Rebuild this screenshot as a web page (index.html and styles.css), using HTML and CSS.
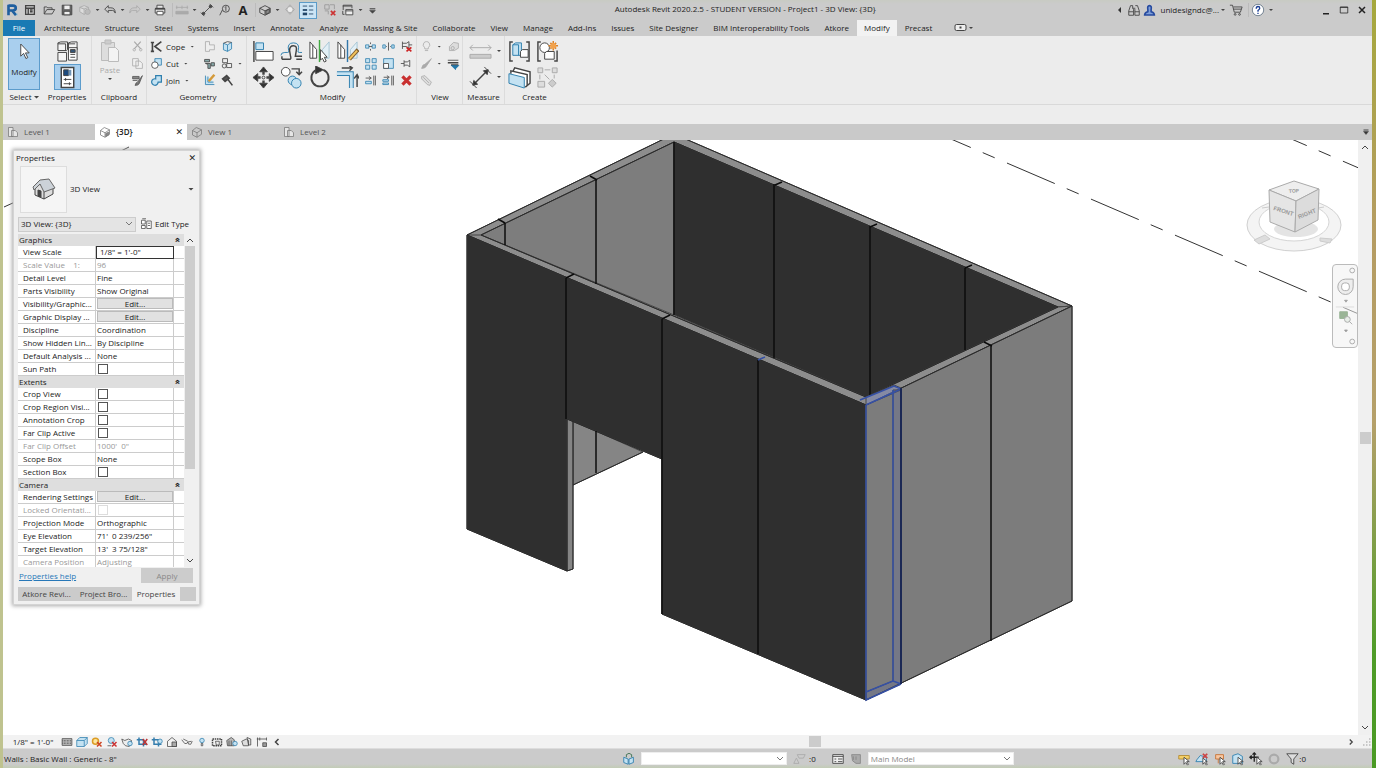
FILE: index.html
```html
<!DOCTYPE html>
<html lang="en">
<head>
<meta charset="utf-8">
<title>Autodesk Revit 2020.2.5</title>
<link rel="stylesheet" href="styles.css">
</head>
<body>
<div class="app">
<header class="titlebar">
  <div class="quick">
    <button class="q" aria-label="Application menu"><svg viewBox="0 0 16 16"><path d="M4 2v12M4 3h5a3 2.500 0 0 1 0 5.500H4M8.500 9l4 5" stroke="#1f5f9f" stroke-width="3"/><path d="M13.500 12v2" stroke="#58a8d8"/></svg></button>
    <button class="q" aria-label="Home"><svg viewBox="0 0 16 16"><path d="M3 3h10v10H3zM3 6h10M6 6v7M8 8h3M8 10h3" stroke-width="1.500"/></svg></button>
    <i class="sep first"></i>
    <button class="q" aria-label="Open"><svg viewBox="0 0 16 16"><path d="M2.500 12.500V4.500h3l1 1h5v2M2.500 12.500l3-5h9l-3 5z"/></svg></button>
    <button class="q" aria-label="Save"><svg viewBox="0 0 16 16"><path d="M2.500 2.500h11v11h-11z" fill="#666"/><path d="M5 3h6v4H5z" fill="#eee" stroke="none"/><path d="M4.500 9.500h7v4h-7z" fill="#eee"/></svg></button>
    <button class="q dim" aria-label="Synchronize"><svg viewBox="0 0 16 16"><path d="M2 5l5-2 5 2v5l-5 3-5-3zM2 5l5 2 5-2M7 7v6" fill="#ddd"/><circle cx="11" cy="10" r="3" fill="#bbb"/></svg></button>
    <i class="dd"></i>
    <button class="q" aria-label="Undo"><svg viewBox="0 0 16 16"><path d="M6 3L2 7l4 4V8.500h5q2 0 3 3 0-6-5-6H6z"/></svg></button>
    <i class="dd"></i>
    <button class="q dim" aria-label="Redo"><svg viewBox="0 0 16 16"><path d="M10 3l4 4-4 4V8.500H5q-2 0-3 3 0-6 5-6h3z"/></svg></button>
    <i class="dd"></i>
    <button class="q" aria-label="Print"><svg viewBox="0 0 16 16"><path d="M4.500 6V2.500h7V6M2.500 6.500h11v5h-11z" fill="#e5e5e5"/><path d="M4.500 9.500h7v4h-7z" fill="#fff"/><path d="M2.500 6.500h11"  stroke-width="2"/></svg></button>
    <i class="sep line"></i>
    <button class="q dim" aria-label="Measure"><svg viewBox="0 0 16 16"><path d="M1 5h14M2 3v4M8 3v4M14 3v4M1 9.500h14v3H1z" fill="#aaa"/></svg></button>
    <i class="dd"></i>
    <button class="q" aria-label="Aligned dimension"><svg viewBox="0 0 16 16"><path d="M3 13L13 3M1 11l4 4M11 1l4 4"/><circle cx="4" cy="12" r="1.500" fill="#444"/><circle cx="12" cy="4" r="1.500" fill="#444"/></svg></button>
    <button class="q" aria-label="Tag"><svg viewBox="0 0 16 16"><path d="M2 14L5 8"/><circle cx="9" cy="6.500" r="4"/><path d="M9 4v5M8 5l1-1"/></svg></button>
    <button class="q textA">A</button>
    <i class="sep line"></i>
    <button class="q" aria-label="Default 3D view"><svg viewBox="0 0 16 16"><path d="M2 6l6-3 6 3v5l-6 3-6-3zM2 6l6 3 6-3M8 9v5"/><path d="M9 9l4-2v4l-4 2z" fill="#888"/></svg></button>
    <i class="dd"></i>
    <button class="q dim" aria-label="Section"><svg viewBox="0 0 16 16"><path d="M8 2l5 5.500L8 13 3 7.500z"/><circle cx="8" cy="7.500" r="3.500" fill="#eee"/></svg></button>
    <button class="q on" aria-label="Thin lines"><svg viewBox="0 0 16 16"><path d="M2 3.500h5M9 3.500h5M9 8h5M9 12.500h5" stroke="#246"/><path d="M2 8h5" stroke="#246" stroke-width="2"/><path d="M2 12.500h5" stroke="#246" stroke-width="3"/></svg></button>
    <i class="sep"></i>
    <button class="q" aria-label="Close inactive views"><svg viewBox="0 0 16 16"><path d="M2 2h5v5H2zM8 2h5v5M2 9h4v4" stroke="#999"/><path d="M9 9l5 5M14 9l-5 5" stroke="#c33" stroke-width="2"/></svg></button>
    <button class="q" aria-label="Switch windows"><svg viewBox="0 0 16 16"><path d="M2.500 8V2.500h10V6M2 3.500h10" /><path d="M5.500 7.500h8v6h-8zM5.500 9h8" fill="#eee"/><path d="M2 9v4h2"/></svg></button>
    <i class="dd"></i>
    <button class="q small" aria-label="Customize"><svg viewBox="0 0 16 16"><path d="M3 5h10" stroke-width="2"/><path d="M3 8h10l-5 5z" fill="#444"/></svg></button>
  </div>
  <div class="title">Autodesk Revit 2020.2.5 - STUDENT VERSION - Project1 - 3D View: {3D}</div>
  <div class="account">
    <i class="back"></i>
    <button class="q" aria-label="Search"><svg viewBox="0 0 16 16"><path d="M4 3h2.500v3l1 1V14H2V9zM9.500 3H12l2 6v5H9V7M6.500 6h3M2 10h5M9 10h5"/></svg></button>
    <button class="user"><svg viewBox="0 0 16 16"><path d="M2 13.500q0-3 4-4V7q-1-5 2-5t2 5v2.500q4 1 4 4z" fill="#7f9fda" stroke="#274b9f" stroke-width="2"/></svg>unidesigndc@...</button>
    <i class="dd"></i>
    <button class="q" aria-label="App store"><svg viewBox="0 0 16 16"><path d="M1 2.500h3l2 8h7l2-6H5M5 7h9"/><circle cx="7" cy="13" r="1"/><circle cx="12" cy="13" r="1"/></svg></button>
    <i class="sep line"></i>
    <button class="q" aria-label="Help"><svg viewBox="0 0 16 16"><circle cx="8" cy="8" r="6.500" fill="#fff" stroke="#678"/><path d="M6 6.500q0-2.500 2-2.500t2 2q0 1-2 2.500V10M8 11v1.500" stroke="#1c3f94" stroke-width="1.500"/></svg></button>
    <i class="dd"></i>
  </div>
  <div class="window">
    <button class="q" aria-label="Minimize"><svg viewBox="0 0 16 16"><path d="M4 13h8" stroke="#222" stroke-width="2"/></svg></button>
    <button class="q" aria-label="Maximize"><svg viewBox="0 0 16 16"><path d="M3 4h10v8H3zM3 4.500h10" stroke="#222"/></svg></button>
    <button class="q" aria-label="Close"><svg viewBox="0 0 16 16"><path d="M4 4l8 8M12 4l-8 8" stroke="#222" stroke-width="2"/></svg></button>
  </div>
</header>

<nav class="menu">
  <button class="file">File</button><button>Architecture</button><button>Structure</button><button>Steel</button><button>Systems</button><button>Insert</button><button>Annotate</button><button>Analyze</button><button>Massing &amp; Site</button><button>Collaborate</button><button>View</button><button>Manage</button><button>Add-Ins</button><button>Issues</button><button>Site Designer</button><button>BIM Interoperability Tools</button><button>Atkore</button><button class="current">Modify</button><button>Precast</button>
  <button class="toggle" aria-label="Ribbon display"><svg viewBox="0 0 20 10"><rect x="1" y="1.500" width="11" height="6" rx="1.500" fill="#eee"/><path d="M5.500 4.500h2" stroke-width="2"/><path d="M15 4h4l-2 2z" fill="#444" stroke="none"/></svg></button>
</nav>

<section class="ribbon">
  <div class="panel select">
    <div class="tools"><button class="big on modify"><svg viewBox="0 0 16 20"><path d="M4 2v13l3-3 2.500 5.500 2-1-2.500-5H13z" fill="#fff"/></svg>Modify</button></div>
    <h2>Select<i class="dd"></i></h2>
  </div>
  <div class="panel props">
    <div class="tools two">
      <button aria-label="Type properties"><svg viewBox="0 0 26 24"><path d="M3 3l3-1h7v8l-1 1H3zM14 3l3-1h6v8l-1 1h-8zM3 13h9v9H3zM3 4h8v7M14 4h7" fill="#f5f5f5"/><path d="M14 8h9v13h-9z" fill="#fff"/><path d="M16 10h5v3h-5z" fill="#357"/><path d="M16 15h5M16 18h5"/></svg></button>
      <button class="on" aria-label="Properties"><svg viewBox="0 0 26 24"><path d="M6.500 1.500h13v21h-13z" fill="#fff" stroke-width="1.500"/><path d="M9 4h5v6H9z" fill="#1c4b80"/><path d="M14 4h3v6h-3z" fill="#6e93b5" stroke="none"/><path d="M9 14h8M9 18.500h8M11 12.500v3M15 17v3"/></svg></button>
    </div>
    <h2>Properties</h2>
  </div>
  <div class="panel clip">
    <div class="tools">
      <button class="big paste"><svg viewBox="0 0 20 24"><path d="M1.500 3.500h13v18h-13z" fill="#ddd"/><path d="M5 1h6v4H5z" fill="#ccc"/><path d="M8.500 8.500h7l3 3v11h-10z" fill="#f3f3f3"/></svg>Paste<i class="dd"></i></button>
      <div class="three dim">
        <button aria-label="Cut"><svg viewBox="0 0 16 16"><path d="M4 2l8 9M12 2L4 11" stroke-width="1.500"/><circle cx="4" cy="12" r="1.500"/><circle cx="12" cy="12" r="1.500"/></svg></button>
        <button aria-label="Copy"><svg viewBox="0 0 16 16"><path d="M2 2h7v9H2zM6 5h5l3 3v6H6z" fill="#f1f1f1"/></svg></button>
        <button class="dark" aria-label="Match type"><svg viewBox="0 0 16 16"><path d="M2 3h8v3H2zM2 8h6" fill="#888"/><path d="M14 2L8 10q-2 0-3 4 4 0 5-2z" fill="#777"/></svg></button>
      </div>
    </div>
    <h2>Clipboard</h2>
  </div>
  <div class="panel geo">
    <div class="tools">
      <div class="three wide">
        <button><svg viewBox="0 0 16 16"><path d="M3 2v12M1 3h4M1 14h4M14 2L6 8l8 6" stroke-width="2"/></svg>Cope<i class="dd"></i></button>
        <button><svg viewBox="0 0 16 16"><path d="M6 2h8v8H6z" class="bl"/><circle cx="6" cy="10" r="4" fill="#fff"/></svg>Cut<i class="dd"></i></button>
        <button><svg viewBox="0 0 16 16"><path d="M7 2h7v8h-4a4 4 0 1 1-3-4z" class="bl" stroke-width="1.500"/></svg>Join<i class="dd"></i></button>
      </div>
      <div class="three">
        <button class="dim" aria-label="Join roof"><svg viewBox="0 0 16 16"><path d="M3 2h5v4h6v6H8v2H3z" fill="#eee"/></svg></button>
        <button aria-label="Beam joins"><svg viewBox="0 0 16 16"><path d="M2 3h6v3H2zM3 8h6v6H6V9zM10 7h4v4h-4z" fill="#8aa"/></svg></button>
        <button aria-label="Wall joins"><svg viewBox="0 0 16 16"><path d="M3 2v11h11M6 3v7h7" class="bl"/><path d="M14 1L7 9" stroke="#d49a3a" stroke-width="3"/></svg></button>
      </div>
      <div class="three">
        <button aria-label="Split face"><svg viewBox="0 0 16 16"><path d="M3 4l5 2v8l-5-2zM8 6l5-3v8l-5 3" class="bl"/><path d="M3 4l5-2 5 1"/></svg></button>
        <button aria-label="Paint"><svg viewBox="0 0 16 16"><path d="M2 2h6v5H2zM7 8h6v5H7z" fill="#eee"/><circle cx="4" cy="11" r="2.500"/></svg></button>
        <button aria-label="Demolish"><svg viewBox="0 0 16 16"><path d="M2 6l5-4 3 3-5 4zM8 6l6 8" fill="#555" stroke-width="2"/></svg></button>
      </div>
      <div class="three arrows"><span></span><i class="dd"></i></div>
    </div>
    <h2>Geometry</h2>
  </div>
  <div class="panel mod">
    <div class="tools">
      <div class="grid4">
        <button aria-label="Align"><svg viewBox="0 0 24 24"><path d="M2 1v22" stroke-width="1.500"/><path d="M4 3h8v7H4z" class="bl"/><path d="M4 12h18v9H4z" fill="#fff"/></svg></button>
        <button aria-label="Offset"><svg viewBox="0 0 24 24"><path d="M1 16q0-3 4-3h3q2 0 1-2-2-8 5-8t5 8q-1 2 1 2h3" class="bl line"/><path d="M2 20h8q2 0 1-3l-1-6q0-5 4-5t3 5l-1 6h7M2 17v3M23 20h-6" stroke-width="1.500"/></svg></button>
        <button aria-label="Mirror pick axis"><svg viewBox="0 0 24 24"><path d="M2 2l7 8v9H2zM5 5v14" fill="#fff"/><path d="M22 2l-7 8v9h7z" fill="#e2eff6" stroke="#a5c4d4"/><path d="M12 0v23" stroke="#4a4" stroke-width="1.500"/><path d="M13 10v11l2-2 2 4 2-1-2-4h3z" fill="#fff"/></svg></button>
        <button aria-label="Mirror draw axis"><svg viewBox="0 0 24 24"><path d="M2 2l7 8v9H2zM5 5v14" fill="#fff"/><path d="M22 2l-7 8v9h7z" fill="#e2eff6" stroke="#a5c4d4"/><path d="M12 0v23" stroke="#37a" stroke-width="1.500"/><path d="M23 10L14 20" stroke="#806033" stroke-width="4"/><path d="M22 11L14 20" stroke="#f4c55c" stroke-width="2"/></svg></button>
        <button aria-label="Move"><svg viewBox="0 0 24 24"><path d="M12 1l4 5H8zM12 23l4-5H8zM1 12l5-4v8zM23 12l-5-4v8z" fill="#333"/><path d="M12 6v3M12 15v3M6 12h3M15 12h3" stroke-width="2.500"/><circle cx="12" cy="12" r="1.500"/></svg></button>
        <button aria-label="Copy element"><svg viewBox="0 0 24 24"><circle cx="6" cy="6" r="4.500" fill="#fff"/><path d="M12 3h8v6M17 6l3 3 3-3" stroke-width="1.500"/><circle cx="13" cy="15" r="4.500" class="bl"/><circle cx="17" cy="18" r="5" class="bl"/></svg></button>
        <button aria-label="Rotate"><svg viewBox="0 0 24 24"><path d="M9 4a9 9 0 1 0 7 0" stroke-width="2"/><path d="M8 0l8 4-8 4z" fill="#333"/></svg></button>
        <button aria-label="Trim corner"><svg viewBox="0 0 24 24"><path d="M1 8h15v15" stroke="#2f7fae" stroke-width="5"/><path d="M1 8h15v15" stroke="#c4e2f2" stroke-width="3"/><path d="M6 2h11M14 0l3 2-3 3M22 22V10M19 13l3-4 2 4" stroke-width="1.500"/></svg></button>
      </div>
      <div class="grid3">
        <button aria-label="Split"><svg viewBox="0 0 16 16"><path d="M2 6h4v4H2zM10 6h4v4h-4z" class="bl"/><path d="M6 8h4M8 3v2M8 11v2"/></svg></button>
        <button aria-label="Split gap"><svg viewBox="0 0 16 16"><path d="M1 6h3v4H1zM12 6h3v4h-3z" class="bl"/><path d="M8 3v10M5 8h1M10 8h1"/></svg></button>
        <button aria-label="Unpin"><svg viewBox="0 0 16 16"><path d="M3 2v9M3 4h5l3-2v8L8 8H3M11 6h4"/><path d="M8 9l6 5M14 9l-6 5" stroke="#c22" stroke-width="2"/></svg></button>
        <button aria-label="Array"><svg viewBox="0 0 16 16"><path d="M2 2h5v5H2zM10 2h5v5h-5zM2 10h5v5H2zM10 10h5v5h-5z" class="bl"/></svg></button>
        <button aria-label="Scale"><svg viewBox="0 0 16 16"><path d="M2 2h12v12H2z" class="bl"/><path d="M2 8h6v6H2z" fill="#fff"/></svg></button>
        <button aria-label="Pin"><svg viewBox="0 0 16 16"><path d="M5 4v8M5 6h4l3-2v8l-3-2H5M1 8h4" fill="#eee"/></svg></button>
        <button aria-label="Trim single"><svg viewBox="0 0 16 16"><path d="M2 9h7v3H2z" class="bl"/><path d="M2 5h6M6 3l3 2-3 2M12 2v12M14 2v12"/></svg></button>
        <button aria-label="Trim multiple"><svg viewBox="0 0 16 16"><path d="M1 7h7v2H1zM1 11h7v2H1z" class="bl"/><path d="M2 4h6M6 2l3 2-3 2M12 2v12M14 2v12"/></svg></button>
        <button aria-label="Delete"><svg viewBox="0 0 16 16"><path d="M3 3l10 10M13 3L3 13" stroke="#c93030" stroke-width="4"/></svg></button>
      </div>
    </div>
    <h2>Modify</h2>
  </div>
  <div class="panel view">
    <div class="tools">
      <div class="three dim">
        <button aria-label="Hide"><svg viewBox="0 0 16 16"><path d="M6 11q0-2-2-4 0-5 4-5t4 5q-2 2-2 4zM6 13h4"/></svg></button>
        <button aria-label="Override"><svg viewBox="0 0 16 16"><path d="M14 2L6 9q-3 0-4 5 5 0 6-3z" fill="#aaa"/></svg></button>
        <button aria-label="Displace"><svg viewBox="0 0 16 16"><path d="M2 3l4-1 8 8-2 4-3-1-7-7zM4 4l7 7" fill="#ddd"/></svg></button>
      </div>
      <div class="three arrows pale"><i class="dd"></i><i class="dd"></i></div>
      <div class="three">
        <button class="dim" aria-label="Selection box"><svg viewBox="0 0 16 16"><path d="M3 8l5-5 6 1v6l-5 3H3z" fill="#ddd"/><circle cx="7" cy="10" r="2"/></svg></button>
        <button aria-label="Linework"><svg viewBox="0 0 16 16"><path d="M1 4h13" stroke-width="1"/><path d="M1 7h13M5 10h9" stroke-width="2"/><path d="M10 11v3l-3-3h6l-3 3" stroke="#27a" stroke-width="2"/></svg></button>
      </div>
    </div>
    <h2>View</h2>
  </div>
  <div class="panel meas">
    <div class="tools">
      <div class="two">
        <button class="dim" aria-label="Measure between"><svg viewBox="0 0 24 24"><path d="M1 8h22M4 5L1 8l3 3M20 5l3 3-3 3"/><path d="M1 15h22v4H1z" fill="#ccc"/></svg></button>
        <button aria-label="Dimension"><svg viewBox="0 0 24 24"><path d="M4 20L20 4" stroke-width="1.500"/><path d="M4 20l1-5 4 4zM20 4l-5 1 4 4z" fill="#333"/><path d="M1 16l7 7M16 1l7 7"/></svg></button>
      </div>
      <div class="two arrows"><i class="dd"></i><i class="dd"></i></div>
    </div>
    <h2>Measure</h2>
  </div>
  <div class="panel create">
    <div class="tools">
      <div class="grid2">
        <button aria-label="Create assembly"><svg viewBox="0 0 24 24"><path d="M5 2H2v20h3M19 2h3v20h-3" stroke-width="1.500"/><path d="M5 5l3-2h6v13H5zM5 5h6v11" class="bl"/><path d="M13 12l2-2h6v8H13z" fill="#fff"/></svg></button>
        <button aria-label="Create parts"><svg viewBox="0 0 24 24"><path d="M5 2H2v20h3M19 22h3V11" stroke-width="1.500"/><circle cx="9" cy="8" r="5" fill="#fff"/><path d="M9 14l2-2h8v8H9z" fill="#fff"/><path d="M18 1v10M13 6h10M15 3l6 6M21 3l-6 6" stroke="#db8124" stroke-width="1.500"/><circle cx="18" cy="6" r="3" fill="#f2a24c" stroke="none"/></svg></button>
        <button aria-label="Create group"><svg viewBox="0 0 24 24"><path d="M5 6l2-4 16 4v12l-5 4" fill="#fff" stroke-width="1.500"/><path d="M3 8V5l17 4v11" fill="#fff" stroke-width="1.500"/><path d="M1 8l16 4v11L1 18z" class="bl"/></svg></button>
        <button class="dim" aria-label="Create similar"><svg viewBox="0 0 24 24"><path d="M2 2h5v5H2zM17 2h5v5h-5zM9 4h6M4 9v5M19 9v4M2 16h7v6H2zM9 9l5 5" fill="#ddd"/><path d="M17 14l4 4-4 4-4-4z" fill="#ccc"/></svg></button>
      </div>
    </div>
    <h2>Create</h2>
  </div>
</section>
<div class="options"></div>

<div class="docs">
  <button class="doc"><svg viewBox="0 0 16 16"><path d="M2 2h6v12H2zM6 6h5l3 3v5H6z" fill="#e5e5e5"/></svg>Level 1</button>
  <button class="doc active"><svg viewBox="0 0 16 16"><path d="M2 6l5-4 7 3v6l-6 4-6-3zM2 6l6 3 6-4M8 9v6" /><path d="M9 10l4-2v4l-4 2z" fill="#888"/></svg>{3D}<span class="close">✕</span></button>
  <button class="doc"><svg viewBox="0 0 16 16"><path d="M2 6l5-4 7 3v6l-6 4-6-3zM2 6l6 3 6-4M8 9v6" /></svg>View 1</button>
  <button class="doc"><svg viewBox="0 0 16 16"><path d="M2 2h6v12H2zM6 6h5l3 3v5H6z" fill="#e5e5e5"/></svg>Level 2</button>
  <button class="more" aria-label="All views"><svg viewBox="0 0 16 16"><path d="M3 4h10" stroke-width="2"/><path d="M3 7h10l-5 6z" fill="#333"/></svg></button>
</div>

<main class="work">
  <div class="canvas">
    <svg class="model" viewBox="3 140 1355 595" preserveAspectRatio="xMidYMin slice" role="img" aria-label="3D model">
      <g stroke="#333" stroke-width="1" fill="none">
        <path d="M923 127L1361 315" stroke-dasharray="52 13 13 13.400"/>
        <path d="M1259 125L1361 169" stroke-dasharray="52 13 13 13.400"/>
        <path d="M121 151l8-4M4 207l11-5"/>
      </g>
      <path d="M467 235L674 134 1072 306 1058 307 674 142 481 235 866 397 1058 307 1072 306 866 405z" fill="#8d8d8d"/>
      <path d="M481 235L674 142V315z" fill="#7d7d7d"/>
      <path d="M674 142L1058 307 866 397 674 315z" fill="#2f2f2f"/>
      <path d="M467 235L481 235 866 397 1058 307 1072 306 866 405z" fill="#8d8d8d"/>
      <path d="M573 421L643 452 573 485z" fill="#858585"/>
      <path d="M567 418l6 3v148l-6 2z" fill="#858585"/>
      <path d="M467 235L866 405V700L662 614V459L567 419V571L467 529z" fill="#2f2f2f"/>
      <path d="M866 405L1072 306V601L866 700z" fill="#7c7c7c"/>
      <path fill="none" stroke="#2a2a2a" stroke-width="1" d="M467 529V235L674 134 1072 306V601L866 700 662 614V459L567 419V571L467 529M467 235L866 405 1072 306M481 235L674 142 1058 307 866 397zM573 421V569L567 571M573 485L643 452"/>
      <g fill="none" stroke="#0c0c0c" stroke-width="1.500">
        <path d="M674 142V315M774 184V358M870 226V396M965 268V350M566 278V419M662 319V614M758 360V654M991 345V641M596 179V284M596 431V473M505 223V245"/>
        <path d="M590 176l7 4M498 219l7 4M566 278l8-4M662 319l8-4M775 185l7-3M870 227l7-3M965 268l7-3M984 342l8 4"/>
      </g>
      <path d="M866 397l28-12 7 3v2l-35 15z" fill="#8188b4" fill-opacity=".6"/>
      <path d="M893 390h8V684l-35 16v-8l27-11z" fill="#6670a0" fill-opacity=".3"/>
      <g fill="none" stroke="#3550a5" stroke-width="1.500"><path d="M866 405V700L901 684M893 390V681L866 692M893 681l8 3M866 405l35-16M860 400l34-14 7 3M758 360l7-3"/><path d="M901 388V684" stroke="#1b2854" stroke-width="2"/></g>
      <g class="cube">
        <ellipse cx="1294" cy="225" rx="47" ry="26" fill="#f4f4f4" stroke="#d0d0d0"/>
        <ellipse cx="1294" cy="222" rx="35" ry="19" fill="#fff" stroke="#d5d5d5"/>
        <ellipse cx="1296" cy="229" rx="22" ry="8" fill="#bbb" stroke="none" opacity=".4"/>
        <path d="M1254 240l11-5 5 4-11 5zM1320 238l12 1-2 4-10-2zM1262 208l7-1M1318 208l6-1" fill="#ddd" stroke="#ccc"/>
        <path d="M1269 190l25-9 25 8-23 12z" fill="#eee" stroke="#aaa"/>
        <path d="M1269 190l27 11-1 31-25-10z" fill="#e5e5e5" stroke="#aaa"/>
        <path d="M1319 189l-23 12-1 31 23-12z" fill="#dcdcdc" stroke="#aaa"/>
        <text x="1273" y="210" transform="rotate(17 1273 210)">FRONT</text>
        <text x="1299" y="219" transform="rotate(-22 1299 219)">RIGHT</text>
        <text x="1289" y="193" class="top" transform="rotate(-5 1289 193)">TOP</text>
      </g>
    </svg>
    <div class="navbar">
      <svg viewBox="0 0 25 84"><circle cx="20" cy="5" r="2.500"/><path d="M5 22a8 8 0 0 1 8-8h8v8a8 8 0 0 1-16 0z" fill="#eee"/><rect x="9" y="18" width="8" height="8" rx="3" fill="#fff"/><path d="M12 36h3l-1.500 2z" fill="#777"/><path d="M3 43h19" stroke="#ddd"/><path d="M7 48h8v7H7z" fill="#9ab596" stroke="#9ab596"/><circle cx="15" cy="56" r="3" fill="#e8eee8"/><path d="M17 58l3 3M12 67h3l-1.500 2z" fill="#777"/><circle cx="20" cy="79" r="2.500"/></svg>
    </div>

    <aside class="palette">
      <header>Properties<button aria-label="Close palette">✕</button></header>
      <button class="type"><span class="thumb"><svg viewBox="0 0 24 24"><path d="M3 10v8l9 4 9-5v-7l-5-7z" fill="#ddd"/><path d="M1 10l7-7 9-1 6 9-11 4-4-8-6 6z" fill="#ccd2d8" stroke="#666"/><path d="M12 15v7" /><path d="M6 13l3 1v6l-3-1z" fill="#444"/></svg></span>3D View<i class="dd"></i></button>
      <div class="instance">
        <select aria-label="Instance"><option>3D View: {3D}</option></select>
        <button class="edit"><svg viewBox="0 0 16 16"><path d="M2 3h5v5H2zM2 10h5v4H2zM3 1h5M9 4h6v10H9zM10.500 7h3M10.500 10h3" fill="#fff"/></svg>Edit Type</button>
      </div>
      <div class="sheet">
        <table>
          <tr class="group"><th colspan="3">Graphics<span>«</span></th></tr>
          <tr><td>View Scale</td><td class="focus">1/8" = 1'-0"</td><td></td></tr>
          <tr class="off"><td>Scale Value &nbsp; &nbsp;1:</td><td>96</td><td></td></tr>
          <tr><td>Detail Level</td><td>Fine</td><td></td></tr>
          <tr><td>Parts Visibility</td><td>Show Original</td><td></td></tr>
          <tr><td>Visibility/Graphic...</td><td class="has"><button>Edit...</button></td><td></td></tr>
          <tr><td>Graphic Display ...</td><td class="has"><button>Edit...</button></td><td></td></tr>
          <tr><td>Discipline</td><td>Coordination</td><td></td></tr>
          <tr><td>Show Hidden Lin...</td><td>By Discipline</td><td></td></tr>
          <tr><td>Default Analysis ...</td><td>None</td><td></td></tr>
          <tr><td><label for="c1">Sun Path</label></td><td><input type="checkbox" id="c1"></td><td></td></tr>
          <tr class="group"><th colspan="3">Extents<span>«</span></th></tr>
          <tr><td><label for="c2">Crop View</label></td><td><input type="checkbox" id="c2"></td><td></td></tr>
          <tr><td><label for="c3">Crop Region Visi...</label></td><td><input type="checkbox" id="c3"></td><td></td></tr>
          <tr><td><label for="c4">Annotation Crop</label></td><td><input type="checkbox" id="c4"></td><td></td></tr>
          <tr><td><label for="c5">Far Clip Active</label></td><td><input type="checkbox" id="c5"></td><td></td></tr>
          <tr class="off"><td>Far Clip Offset</td><td>1000' &nbsp;0"</td><td></td></tr>
          <tr><td>Scope Box</td><td>None</td><td></td></tr>
          <tr><td><label for="c6">Section Box</label></td><td><input type="checkbox" id="c6"></td><td></td></tr>
          <tr class="group"><th colspan="3">Camera<span>«</span></th></tr>
          <tr><td>Rendering Settings</td><td class="has"><button>Edit...</button></td><td></td></tr>
          <tr class="off"><td><label for="c7">Locked Orientati...</label></td><td><input type="checkbox" id="c7" disabled></td><td></td></tr>
          <tr><td>Projection Mode</td><td>Orthographic</td><td></td></tr>
          <tr><td>Eye Elevation</td><td>71' &nbsp;0 239/256"</td><td></td></tr>
          <tr><td>Target Elevation</td><td>13' &nbsp;3 75/128"</td><td></td></tr>
          <tr class="off"><td>Camera Position</td><td>Adjusting</td><td></td></tr>
        </table>
        <div class="bar"><svg viewBox="0 0 12 12"><path d="M3 8l3-3 3 3"/></svg><i></i><svg viewBox="0 0 12 12"><path d="M3 4l3 3 3-3"/></svg></div>
      </div>
      <div class="apply"><a href="#">Properties help</a><button disabled>Apply</button></div>
      <div class="ptabs"><button>Atkore Revi...</button><button>Project Bro...</button><button class="active">Properties</button><i></i></div>
    </aside>
  </div>
  <div class="vscroll"><svg viewBox="0 0 12 12"><path d="M3 8l3-3 3 3"/></svg><i></i><svg viewBox="0 0 12 12"><path d="M3 4l3 3 3-3"/></svg></div>
</main>

<div class="viewbar">
  <button class="scale">1/8" = 1'-0"</button>
  <button aria-label="Detail level"><svg viewBox="0 0 16 16"><path d="M1.500 3.500h13v9h-13z" fill="#bbb"/><path d="M2 6h12M2 8h12M2 10h12" stroke-dasharray="1 1"/></svg></button>
  <button aria-label="Visual style"><svg viewBox="0 0 16 16"><path d="M1 6l4-4h10v8l-4 4H1zM1 6h10v8M11 6l4-4" class="bl"/></svg></button>
  <button aria-label="Sun path off"><svg viewBox="0 0 16 16"><circle cx="6" cy="7" r="4" fill="#fce8a0" stroke="#dc9c24" stroke-width="2"/><path d="M8 8l6 6M14 8l-6 6" stroke="#c42" stroke-width="2"/></svg></button>
  <button aria-label="Shadows off"><svg viewBox="0 0 16 16"><circle cx="7" cy="6" r="4" class="bl"/><path d="M2 13h5"/><path d="M8 8l6 6M14 8l-6 6" stroke="#c33" stroke-width="2"/></svg></button>
  <button aria-label="Rendering"><svg viewBox="0 0 16 16"><path d="M1 4l4 2 5-2 4 2v4l-3 4-5-1-3-3z" fill="#eee"/><circle cx="12" cy="10" r="3" class="bl"/></svg></button>
  <button aria-label="Crop view"><svg viewBox="0 0 16 16"><path d="M4 2v9h10M1 5h9v9" stroke="#357dad" stroke-width="2"/><path d="M9 4l6 8M15 4l-6 8" stroke="#b33" stroke-width="2"/></svg></button>
  <button aria-label="Show crop region"><svg viewBox="0 0 16 16"><path d="M4 2v9h10M1 5h9v9" stroke="#357dad" stroke-width="2"/><circle cx="12" cy="7" r="3" class="bl"/></svg></button>
  <button aria-label="Lock view"><svg viewBox="0 0 16 16"><path d="M2 7l6-5 6 5v7H2z"/><path d="M8 8h6v6H8z" fill="#aaa"/></svg></button>
  <button aria-label="Hide isolate"><svg viewBox="0 0 16 16"><path d="M1 5l4 5q3 1 4-2l5-1M9 8q0 4 4 3l2-4M3 4l6 3"/></svg></button>
  <button aria-label="Reveal hidden"><svg viewBox="0 0 16 16"><circle cx="8" cy="6" r="3" class="bl"/><path d="M7 10h2v3H7z"/></svg></button>
  <button aria-label="View properties"><svg viewBox="0 0 16 16"><path d="M2 4h12v9H2z" stroke-dasharray="2 1" stroke-width="2"/><path d="M6 7h5v5H7z" fill="#eee"/></svg></button>
  <button aria-label="Analytical model"><svg viewBox="0 0 16 16"><path d="M1 6l6-4 4 3v8H2zM4 6v7M7 6v7" fill="#bbb"/><circle cx="12" cy="10" r="3" class="bl"/></svg></button>
  <button aria-label="Displacement sets"><svg viewBox="0 0 16 16"><path d="M1 7l6-3 3 2v7H3zM8 2l5 2v8h-3z" fill="#ddd"/></svg></button>
  <button aria-label="Constraints"><svg viewBox="0 0 16 16"><path d="M2 2v12M1 4h13M5 2v4M14 2v4"/><path d="M9 9h5v5H9z" fill="#999"/></svg></button>
  <button aria-label="Scroll left"><svg viewBox="0 0 16 16"><path d="M10 4L6 8l4 4" stroke-width="2"/></svg></button>
  <div class="hscroll"><i></i></div>
  <svg class="rightarrow" viewBox="0 0 16 16"><path d="M6 4l4 4-4 4" stroke-width="2"/></svg>
  <svg class="grip" viewBox="0 0 16 16"><path d="M12 4h2M12 8h2M12 12h2M8 8h2M8 12h2M4 12h2" stroke="#bbb" stroke-width="2"/></svg>
</div>

<footer class="status">
  <div class="message">Walls : Basic Wall : Generic - 8"</div>
  <svg viewBox="0 0 16 16"><path d="M2 6l5 2v6l-5-2zM8 8l5-2v6l-5 2z" class="bl"/><path d="M5 6V3q3-3 6 0v3" stroke="#386d4b"/></svg>
  <select aria-label="Worksets"><option></option></select>
  <svg class="dim" viewBox="0 0 16 16"><path d="M6 3h9l-2 4H8zM5 7l-3 6h6z" fill="#ccc"/></svg><span class="count">:0</span>
  <svg class="gap" viewBox="0 0 16 16"><path d="M2 3h12v10H2zM2 5h12M4 8h2M8 8h5M4 11h2M8 11h5" fill="#eee"/></svg>
  <svg class="dim2" viewBox="0 0 16 16"><path d="M3 3h10v10H8l-4-3zM5 5v4M8 5v4" fill="#aaa"/></svg>
  <select aria-label="Design option"><option>Main Model</option></select>
  <div class="picks">
    <svg viewBox="0 0 16 16"><path d="M2 4h12v4H2z" fill="#f4cf66" stroke="#b48a32"/><path d="M8 6v8l2-2 2 3 1-1-2-3h3z" fill="#fff"/></svg>
    <svg viewBox="0 0 16 16"><path d="M2 9l4-5 7 2v5H1z" class="bl"/><path d="M9 2l5 5M14 2L9 7" stroke="#c44" stroke-width="2"/><path d="M9 7v7l2-2 2 3 1-1-2-3h2z" fill="#fff"/></svg>
    <svg viewBox="0 0 16 16"><path d="M3 3h9v5H3zM6 8v5" fill="#f7c6a0" stroke="#c77133"/><path d="M8 6v8l2-2 2 3 1-1-2-3h3z" fill="#fff"/></svg>
    <svg viewBox="0 0 16 16"><path d="M2 4l6-2 5 3v8H2z" class="bl"/><path d="M8 6v8l2-2 2 3 1-1-2-3h3z" fill="#fff"/></svg>
    <svg viewBox="0 0 16 16"><path d="M6 1v10M1 6h10M4 3l2-2 2 2M3 4L1 6l2 2" stroke="#222" stroke-width="1.500"/><path d="M9 6v8l2-2 2 3 1-1-2-3h3z" fill="#fff"/></svg>
    <svg viewBox="0 0 16 16"><circle cx="8" cy="8" r="5" stroke="#aaa" stroke-width="2.500"/></svg>
    <svg viewBox="0 0 16 16"><path d="M2 2h13l-5 6v6l-3-2V8z" fill="#ddd"/></svg><span>:0</span>
  </div>
</footer>
</div>
</body>
</html>
```
FILE: styles.css
```css
* { box-sizing: border-box; }
body {
  margin: 0;
  height: 100vh;
  padding: 0 4px 0 3px;
  overflow: hidden;
  background: linear-gradient(#a5a83c, #b59c62 30%, #b5a06a 55%, #4f9c28 85%, #4a9a24);
  font: 8px/12px "Open Sans", "Noto Sans", sans-serif;
  color: #222;
}
.app {
  height: 100%;
  display: flex;
  flex-direction: column;
  background: #cbcbcb;
  box-shadow: -3px 0 #bfc38f;
}
button, select, input { font: inherit; color: inherit; margin: 0; padding: 0; border: 0; background: none; }
button { display: flex; align-items: center; justify-content: center; white-space: nowrap; }
svg { fill: none; stroke: #444; stroke-width: 1; flex: none; display: block; }
.bl { stroke: #2f7fae; fill: #c4e2f2; }
.bl.line { fill: none; }
.dim svg { stroke: #aaa; }
.dim .dark svg { stroke: #555; }
.dd { flex: none; width: 8px; height: 6px; display: flex; align-items: center; justify-content: center; }
.dd::before { content: ""; width: 4px; height: 2px; background: #444; clip-path: polygon(0 0, 100% 0, 50% 100%); }
h2 { margin: 0; font: inherit; }

.titlebar { flex: none; height: 20px; display: flex; align-items: center; background: linear-gradient(#c8cbc3, #cbcbcb 4px); }
.quick, .account, .window { display: flex; align-items: center; }
.quick .dd { width: 7px; }
.q { width: 18px; height: 17px; }
.q svg { width: 14px; height: 14px; }
.q.on { border: 1px solid #5b9bc8; background: #cbe4f5; }
.q.small { width: 16px; }
.q.small svg { width: 9px; height: 9px; }
.textA { font: bold 13px/16px "Open Sans", sans-serif; }
.sep { width: 4px; height: 14px; }
.sep.first { width: 1px; }
.sep.line { border-right: 1px solid #bbb; }
.title { flex: 1; text-align: center; line-height: 16px; height: 18px; padding-right: 8px; }
.account { margin-right: 42px; }
.user { gap: 4px; }
.user svg { width: 13px; height: 13px; }
.back { border: 3px solid transparent; border-right-color: #333; border-left: 0; margin-right: 4px; }
.window { padding-right: 1px; }
.window .q { width: 18px; }
.window svg { width: 12px; height: 12px; }

.menu { flex: none; height: 16px; display: flex; gap: 1px; }
.menu button { padding: 0 7px; }
.menu .file { width: 32px; margin-right: 1px; background: #1a7ab4; color: #fff; }
.menu .current { background: #f2f2f2; }
.menu .toggle { margin-left: 7px; }
.toggle svg { width: 20px; height: 10px; }

.ribbon { flex: none; height: 69px; display: flex; background: #ececec; border-bottom: 1px solid #d9d9d9; }
.panel { display: flex; flex-direction: column; border-right: 1px solid #dcdcdc; padding-top: 2px; }
.panel h2 { display: flex; align-items: center; justify-content: center; height: 14px; }
.panel h2 .dd { width: 10px; }
.panel h2 .dd::before { width: 6px; height: 3px; }
.tools { display: flex; height: 52px; }
.two { display: grid; grid-template-rows: 26px 26px; }
.three { display: grid; grid-template-rows: repeat(3, 17px); width: 18px; }
.three svg, .grid3 svg { width: 13px; height: 13px; }
.two svg, .grid4 svg, .grid2 svg { width: 23px; height: 23px; }
.arrows { width: 10px; align-items: center; }
.big { flex-direction: column; }
.tools .on { background: #a9cfee; border: 1px solid #5c9ccc; }
.select { width: 40px; padding-left: 5px; border: 0; }
.modify { width: 32px; gap: 5px; justify-content: flex-start; padding-top: 3px; }
.modify svg { width: 15px; height: 19px; }
.props { width: 49px; }
.props .tools { justify-content: center; grid-template-columns: 27px; }
.props svg { width: 25px; height: 23px; }
.clip { width: 55px; }
.paste { width: 36px; color: #aaa; justify-content: flex-start; }
.paste svg { width: 20px; height: 26px; stroke: #bbb; }
.geo { width: 100px; padding-left: 3px; }
.wide { width: 50px; }
.wide button { justify-content: flex-start; gap: 3px; }
.geo .arrows { width: 4px; }
.mod { width: 170px; padding-left: 2px; }
.grid4 { display: grid; grid-template: 26px 26px / repeat(4, 28px); }
.grid3 { display: grid; grid-template: repeat(3, 17px) / repeat(3, 18px); }
.view { width: 46px; padding-left: 1px; }
.meas { width: 42px; }
.meas .two:first-child { width: 30px; margin-left: 2px; }
.meas .arrows { width: 8px; }
.create { width: 59px; border: 0; }
.grid2 { display: grid; grid-template: 26px 26px / 28px 28px; }
.options { flex: none; height: 19px; background: #ededed; }

.docs { flex: none; height: 16px; display: flex; background: #c9c9c9; }
.doc { width: 92px; justify-content: flex-start; gap: 5px; padding: 0 4px; color: #555; }
.doc svg { width: 12px; height: 12px; stroke: #777; }
.doc.active { background: #fff; color: #222; font-weight: 600; }
.close { margin-left: auto; font: bold 9px/12px "DejaVu Sans", sans-serif; }
.more { margin-left: auto; width: 13px; }
.more svg { width: 8px; height: 8px; }

.work { flex: 1; min-height: 0; display: flex; background: #fff; }
.canvas { position: relative; flex: 1; min-width: 0; overflow: hidden; }
.model { width: 100%; height: 100%; }
.cube text { font: bold 6px "Liberation Sans", sans-serif; fill: #999; stroke: none; }
.cube .top { font-size: 5px; }
.navbar { position: absolute; right: 0; top: 124px; width: 26px; border: 1px solid #bbb; border-radius: 4px; background: #f0f0f088; }
.navbar svg { width: 24px; height: 82px; stroke: #aaa; }
.vscroll { width: 14px; display: flex; flex-direction: column; justify-content: space-between; align-items: center; background: #f0f0f0; padding: 1px 0; }
.vscroll svg, .bar svg { width: 12px; height: 12px; }
.vscroll i { width: 11px; height: 12px; margin: auto 0; background: #ccc; }

.palette { position: absolute; left: 10px; top: 10px; width: 187px; padding: 0 4px 3px; background: #f0f0f0; border: 1px solid #d4d4d4; box-shadow: 0 0 4px 1px #aaa; display: flex; flex-direction: column; }
.palette header { display: flex; height: 13px; align-items: center; justify-content: space-between; margin: 0 -1px 0 -2px; }
.palette header button { font: bold 9px/12px "DejaVu Sans", sans-serif; }
.type { height: 50px; justify-content: flex-start; gap: 3px; }
.type .dd { margin-left: auto; }
.type .dd::before { width: 6px; height: 3px; }
.thumb { width: 47px; height: 47px; margin-left: 2px; display: grid; place-items: center; border: 1px solid #ddd; background: #f5f5f5; }
.thumb svg { width: 24px; height: 24px; }
.instance { display: flex; height: 20px; align-items: center; gap: 4px; }
select { appearance: none; height: 15px; padding: 0 2px; border: 1px solid #ccc; background: #e4e4e4 url("data:image/svg+xml,%3Csvg xmlns='http://www.w3.org/2000/svg' width='8' height='6'%3E%3Cpath d='M1 1l3 3 3-3' fill='none' stroke='%23777'/%3E%3C/svg%3E") right 2px center no-repeat; }
.instance select { width: 118px; }
.edit { gap: 3px; }
.edit svg { width: 12px; height: 12px; }
.sheet { display: flex; height: 333px; overflow: hidden; background: #f5f5f5; }
table { display: block; width: 166px; background: #fff; }
tbody { display: block; }
tr { display: grid; grid-template-columns: 78px 78px 10px; }
tr.group { grid-template-columns: 1fr; }
td, th { padding: 0; height: 13px; line-height: 12px; border-bottom: 1px solid #ccc; text-align: left; font-weight: 400; white-space: nowrap; overflow: hidden; }
th { height: 12px; padding: 0 3px 0 1px; background: #dedede; border: 0; }
th span { float: right; font-weight: 700; transform: rotate(90deg); }
td:first-child { padding-left: 5px; border-right: 1px solid #ccc; }
td:nth-child(2) { padding-left: 1px; border-right: 1px solid #ccc; }
.off { color: #999; }
td.focus { border: 1px solid #333; padding-left: 3px; line-height: 10px; }
.has button { width: 76px; height: 11px; line-height: 10px; border: 1px solid #bbb; background: #e1e1e1; }
td input { appearance: none; display: block; width: 10px; height: 10px; margin: 1px; border: 1px solid #555; background: #fff; }
td input:disabled { border-color: #ddd; }
.bar { flex: 1; display: flex; flex-direction: column; align-items: center; background: #f0f0f0; }
.bar i { width: 11px; height: 223px; background: #cdcdcd; margin-bottom: auto; }
.apply { display: flex; justify-content: space-between; align-items: flex-start; height: 20px; line-height: 15px; padding: 1px 2px 0 1px; }
.apply a { color: #2878b8; }
.apply button { width: 52px; height: 15px; background: #ccc; color: #888; }
.ptabs { display: flex; height: 14px; margin-right: -1px; background: #cbcbcb; }
.ptabs button { width: 57px; color: #444; }
.ptabs .active { width: 48px; background: #f0f0f0; }

.viewbar { flex: none; height: 14px; display: flex; align-items: center; background: #f2f2f2; border-bottom: 1px solid #ddd; }
.viewbar button { width: 15px; }
.viewbar .scale { width: 56px; padding-left: 4px; }
.hscroll { flex: 1; height: 11px; }
.hscroll i { display: block; width: 12px; height: 11px; margin-left: 49.4%; background: #ccc; }
.viewbar svg { width: 12px; height: 12px; }
.viewbar .rightarrow { width: 10px; height: 10px; }
.viewbar .grip { margin-left: 4px; }

.status { flex: none; height: 19px; display: flex; align-items: center; background: linear-gradient(#cbcbcb 15px, #c2ccb5); }
.status svg { width: 14px; height: 14px; }
.message { flex: 0 0 45%; padding-left: 1px; margin-right: 3px; }
.status select { width: 146px; height: 13px; margin: 0 5px; background-color: #fff; border-color: #eee; color: #888; line-height: 11px; }
.status .dim { stroke: #aaa; }
.status .dim2 { stroke: #888; margin-left: 4px; }
.count { padding-left: 3px; }
.status .gap { margin-left: 15px; }
.picks { margin-left: auto; margin-right: 66px; display: flex; align-items: center; gap: 4px; }
.picks span { margin-left: -4px; }
```
